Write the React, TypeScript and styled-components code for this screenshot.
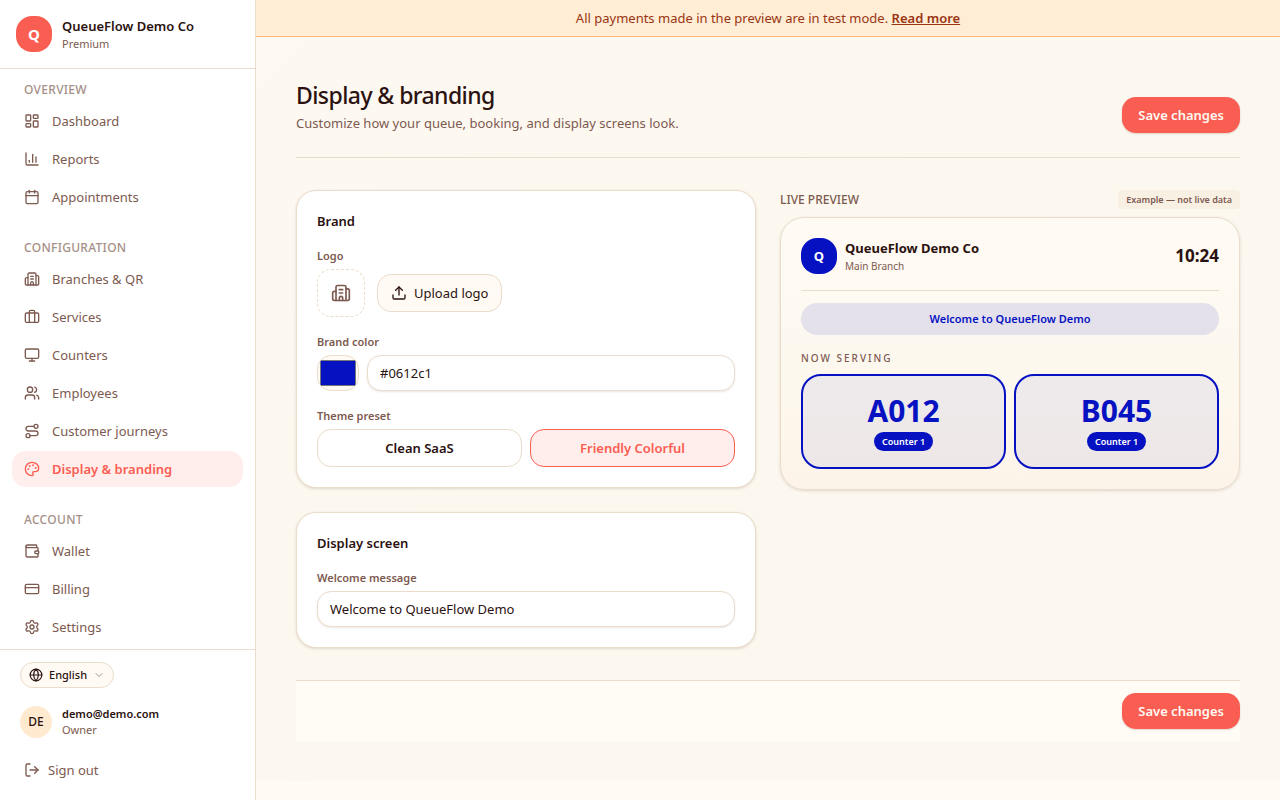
import React, { useState } from "react";
import styled, { createGlobalStyle, css } from "styled-components";
import {
  Briefcase,
  Building2,
  Calendar,
  ChartColumn,
  ChevronDown,
  CreditCard,
  Globe,
  LayoutDashboard,
  LogOut,
  Monitor,
  Palette,
  Route,
  Settings,
  Upload,
  Users,
  Wallet,
  type LucideIcon,
} from "lucide-react";

const color = {
  page: "#fffaf3",
  surface: "#ffffff",
  text: "#2b1210",
  muted: "#7d5a50",
  faint: "#a58f87",
  border: "#ebdccb",
  accent: "#fa5d52",
  accentSoft: "#ffeeec",
  peach: "#ffead0",
};

const GlobalStyle = createGlobalStyle`
  *, *::before, *::after { box-sizing: border-box; }
  body {
    margin: 0;
    background: ${color.page};
    color: ${color.text};
    font-family: "Noto Sans", "Open Sans", sans-serif;
    font-size: 13px;
    line-height: 20px;
  }
  button, input { font: inherit; color: inherit; }
  button { cursor: pointer; }
  h1, h2, p { margin: 0; }
`;

const Shell = styled.div`
  display: flex;
  align-items: flex-start;
  min-height: 100vh;
`;

const Sidebar = styled.aside`
  position: sticky;
  top: 0;
  display: flex;
  flex-direction: column;
  flex: 0 0 256px;
  height: 100vh;
  background: ${color.surface};
  border-right: 1px solid ${color.border};
`;

const Workspace = styled.header`
  display: flex;
  align-items: center;
  gap: 10px;
  padding: 16px;
  border-bottom: 1px solid ${color.border};
`;

const Monogram = styled.span<{ $tone: string; $size: number }>`
  display: flex;
  align-items: center;
  justify-content: center;
  flex: none;
  width: 36px;
  height: 36px;
  border-radius: 16px;
  background: ${(p) => p.$tone};
  color: #fff;
  font-size: ${(p) => p.$size}px;
  font-weight: 700;
`;

const Stack = styled.div`
  display: flex;
  flex-direction: column;
  min-width: 0;
`;

const Name = styled.span<{ $weight?: number }>`
  font-size: 13px;
  line-height: 20px;
  font-weight: ${(p) => p.$weight ?? 600};
`;

const Caption = styled.span<{ $small?: boolean }>`
  font-size: ${(p) => (p.$small ? 10 : 11)}px;
  line-height: 16px;
  color: ${color.muted};
`;

const Nav = styled.nav`
  display: flex;
  flex-direction: column;
  flex: 1;
  gap: 24px;
  min-height: 0;
  overflow: hidden;
  padding: 12px 12px 4px;
`;

const NavGroup = styled.section`
  display: flex;
  flex-direction: column;
  gap: 2px;
`;

const NavHeading = styled.h2`
  padding: 0 12px;
  margin-bottom: 2px;
  font-size: 12px;
  line-height: 18px;
  font-weight: 500;
  letter-spacing: 0.3px;
  text-transform: uppercase;
  color: ${color.faint};
`;

const NavLink = styled.a<{ $active?: boolean }>`
  display: flex;
  align-items: center;
  gap: 12px;
  height: 36px;
  flex: none;
  padding: 0 12px;
  border-radius: 14px;
  color: ${color.muted};
  text-decoration: none;
  ${(p) =>
    p.$active &&
    css`
      background: ${color.accentSoft};
      color: ${color.accent};
      font-weight: 600;
    `}
`;

const Account = styled.footer`
  display: flex;
  flex-direction: column;
  align-items: flex-start;
  border-top: 1px solid ${color.border};
  padding: 12px 12px 12px 20px;
`;

const Language = styled.button`
  display: flex;
  align-items: center;
  gap: 6px;
  height: 26px;
  padding: 0 8px;
  border: 1px solid ${color.border};
  border-radius: 13px;
  background: ${color.page};
  font-size: 11px;
  font-weight: 500;

  svg:last-child { color: ${color.faint}; }
`;

const Profile = styled.div`
  display: flex;
  align-items: center;
  gap: 10px;
  margin: 18px 0 14px;
`;

const Initials = styled.span`
  display: flex;
  align-items: center;
  justify-content: center;
  width: 32px;
  height: 32px;
  border-radius: 50%;
  background: ${color.peach};
  font-size: 12px;
  font-weight: 500;
`;

const Email = styled.span`
  font-size: 11px;
  line-height: 16px;
  font-weight: 600;
`;

const SignOut = styled.button`
  display: flex;
  align-items: center;
  gap: 8px;
  height: 36px;
  padding: 0 4px;
  border: 0;
  background: none;
  color: ${color.muted};
`;

const Main = styled.main`
  flex: 1;
  min-width: 0;
`;

const TestBanner = styled.div`
  padding: 8px 16px;
  text-align: center;
  background: #ffedd5;
  border-bottom: 1px solid #fdba74;
  color: #9a3412;

  a { color: inherit; font-weight: 600; text-decoration: underline; }
`;

const Content = styled.div`
  padding: 40px;
  background: linear-gradient(135deg, #fdf8f1, #fcf8ef 50%, #fcf7f1);
`;

const PageHeader = styled.header`
  display: flex;
  align-items: flex-end;
  justify-content: space-between;
  padding-bottom: 24px;
  margin-bottom: 32px;
  border-bottom: 1px solid ${color.border};
`;

const Title = styled.h1`
  font-size: 23px;
  line-height: 36px;
  font-weight: 500;
  letter-spacing: -0.025em;
`;

const Subtitle = styled.p`
  color: ${color.muted};
`;

const PrimaryButton = styled.button`
  height: 36px;
  padding: 0 16px;
  border: 0;
  border-radius: 14px;
  background: ${color.accent};
  color: #fffaf3;
  font-weight: 600;
  box-shadow: 0 1px 2px rgba(60, 20, 10, 0.16);
`;

const Columns = styled.div`
  display: grid;
  grid-template-columns: repeat(2, minmax(0, 1fr));
  gap: 24px;
  align-items: start;
`;

const Forms = styled.div`
  display: flex;
  flex-direction: column;
  gap: 24px;
`;

const Card = styled.section`
  display: flex;
  flex-direction: column;
  gap: 16px;
  padding: 20px;
  background: ${color.surface};
  border: 1px solid ${color.border};
  border-radius: 20px;
  box-shadow: 0 1px 3px rgba(90, 50, 20, 0.16);
`;

const CardTitle = styled.h2`
  font-size: 13px;
  line-height: 20px;
  font-weight: 600;
`;

const Field = styled.div`
  display: flex;
  flex-direction: column;
  gap: 4px;
`;

const labelText = css`
  font-size: 11px;
  line-height: 18px;
  font-weight: 600;
  color: ${color.muted};
`;

const Label = styled.label`
  ${labelText}
`;

const FieldName = styled.span`
  ${labelText}
`;

const FieldRow = styled.div<{ $gap: number }>`
  display: flex;
  align-items: center;
  gap: ${(p) => p.$gap}px;
`;

const LogoSlot = styled.div`
  display: flex;
  align-items: center;
  justify-content: center;
  width: 48px;
  height: 48px;
  border: 1px dashed ${color.border};
  border-radius: 14px;
  color: ${color.muted};
`;

const UploadButton = styled.button`
  display: flex;
  align-items: center;
  gap: 7px;
  height: 38px;
  padding: 0 13px;
  border: 1px solid ${color.border};
  border-radius: 14px;
  background: ${color.page};
`;

const Swatch = styled.input`
  width: 42px;
  height: 36px;
  padding: 0;
  border: 1px solid ${color.border};
  border-radius: 14px;
  background: ${color.page};
`;

const TextInput = styled.input`
  flex: 1;
  min-width: 0;
  height: 36px;
  flex-basis: 36px;
  padding: 0 12px;
  border: 1px solid ${color.border};
  border-radius: 14px;
  background: ${color.surface};
  box-shadow: 0 1px 2px rgba(60, 20, 10, 0.1);
`;

const Presets = styled.div`
  display: grid;
  grid-template-columns: 1fr 1fr;
  gap: 8px;
`;

const Preset = styled.button<{ $selected: boolean }>`
  height: 38px;
  border: 1px solid ${(p) => (p.$selected ? color.accent : color.border)};
  border-radius: 14px;
  background: ${(p) => (p.$selected ? color.accentSoft : color.surface)};
  color: ${(p) => (p.$selected ? color.accent : color.text)};
  font-weight: 600;
`;

const PreviewHeading = styled.div`
  display: flex;
  align-items: center;
  justify-content: space-between;
  margin-bottom: 8px;
  color: ${color.muted};
`;

const PreviewTitle = styled.h2`
  font-size: 12px;
  line-height: 19px;
  font-weight: 500;
  text-transform: uppercase;
`;

const Hint = styled.span`
  padding: 2px 8px;
  border-radius: 4px;
  background: #f9f0e4;
  font-size: 9px;
  line-height: 15px;
  font-weight: 600;
`;

const Screen = styled.section`
  padding: 20px;
  border: 1px solid ${color.border};
  border-radius: 24px;
  background: linear-gradient(180deg, #fffaf4, #fdf8ee 60%, #fdf4e9);
  box-shadow: 0 1px 3px rgba(90, 50, 20, 0.16);
`;

const ScreenHeader = styled.div`
  display: flex;
  align-items: center;
  gap: 8px;
  padding-bottom: 16px;
  border-bottom: 1px solid ${color.border};
`;

const Clock = styled.time`
  margin-left: auto;
  font-size: 17px;
  line-height: 28px;
  font-weight: 700;
`;

const Welcome = styled.p<{ $tone: string }>`
  margin-top: 12px;
  padding: 8px 12px;
  min-height: 32px;
  border-radius: 16px;
  background: color-mix(in srgb, ${(p) => p.$tone} 10%, transparent);
  color: ${(p) => p.$tone};
  font-size: 11px;
  line-height: 16px;
  font-weight: 600;
  text-align: center;
`;

const Serving = styled.p`
  margin: 16px 0 8px;
  font-size: 10px;
  line-height: 15px;
  font-weight: 500;
  letter-spacing: 2px;
  text-transform: uppercase;
  color: ${color.muted};
`;

const Tickets = styled.div`
  display: grid;
  grid-template-columns: 1fr 1fr;
  gap: 8px;
`;

const Ticket = styled.div<{ $tone: string }>`
  display: flex;
  flex-direction: column;
  align-items: center;
  gap: 2px;
  padding: 16px;
  border: 2px solid ${(p) => p.$tone};
  border-radius: 20px;
  background: color-mix(in srgb, ${(p) => p.$tone} 6%, transparent);
`;

const TicketNumber = styled.span<{ $tone: string }>`
  color: ${(p) => p.$tone};
  font-size: 30px;
  line-height: 38px;
  font-weight: 700;
`;

const CounterBadge = styled.span<{ $tone: string }>`
  padding: 2px 8px;
  border-radius: 10px;
  background: ${(p) => p.$tone};
  color: #fff;
  font-size: 9px;
  line-height: 15px;
  font-weight: 600;
`;

const ActionBar = styled.footer`
  display: flex;
  justify-content: flex-end;
  margin-top: 32px;
  padding: 12px 0;
  border-top: 1px solid ${color.border};
  background: #fffcf5;
`;

type NavEntry = { label: string; icon: LucideIcon };

const navigation: { heading: string; items: NavEntry[] }[] = [
  {
    heading: "Overview",
    items: [
      { label: "Dashboard", icon: LayoutDashboard },
      { label: "Reports", icon: ChartColumn },
      { label: "Appointments", icon: Calendar },
    ],
  },
  {
    heading: "Configuration",
    items: [
      { label: "Branches & QR", icon: Building2 },
      { label: "Services", icon: Briefcase },
      { label: "Counters", icon: Monitor },
      { label: "Employees", icon: Users },
      { label: "Customer journeys", icon: Route },
      { label: "Display & branding", icon: Palette },
    ],
  },
  {
    heading: "Account",
    items: [
      { label: "Wallet", icon: Wallet },
      { label: "Billing", icon: CreditCard },
      { label: "Settings", icon: Settings },
    ],
  },
];

const presets = ["Clean SaaS", "Friendly Colorful"];
const tickets = ["A012", "B045"];

export default function App() {
  const [brand, setBrand] = useState("#0612c1");
  const [preset, setPreset] = useState("Friendly Colorful");
  const [message, setMessage] = useState("Welcome to QueueFlow Demo");

  return (
    <>
      <GlobalStyle />
      <Shell>
        <Sidebar>
          <Workspace>
            <Monogram $tone={color.accent} $size={15}>Q</Monogram>
            <Stack>
              <Name>QueueFlow Demo Co</Name>
              <Caption>Premium</Caption>
            </Stack>
          </Workspace>
          <Nav>
            {navigation.map((group) => (
              <NavGroup key={group.heading}>
                <NavHeading>{group.heading}</NavHeading>
                {group.items.map(({ label, icon: Icon }) => (
                  <NavLink key={label} href="#" $active={label === "Display & branding"}>
                    <Icon size={16} />
                    {label}
                  </NavLink>
                ))}
              </NavGroup>
            ))}
          </Nav>
          <Account>
            <Language type="button">
              <Globe size={14} />
              English
              <ChevronDown size={12} />
            </Language>
            <Profile>
              <Initials>DE</Initials>
              <Stack>
                <Email>demo@demo.com</Email>
                <Caption>Owner</Caption>
              </Stack>
            </Profile>
            <SignOut type="button">
              <LogOut size={16} />
              Sign out
            </SignOut>
          </Account>
        </Sidebar>
        <Main>
          <TestBanner>
            All payments made in the preview are in test mode. <a href="#">Read more</a>
          </TestBanner>
          <Content>
            <PageHeader>
              <div>
                <Title>Display &amp; branding</Title>
                <Subtitle>Customize how your queue, booking, and display screens look.</Subtitle>
              </div>
              <PrimaryButton type="button">Save changes</PrimaryButton>
            </PageHeader>
            <Columns>
              <Forms>
                <Card>
                  <CardTitle>Brand</CardTitle>
                  <Field>
                    <FieldName>Logo</FieldName>
                    <FieldRow $gap={12}>
                      <LogoSlot>
                        <Building2 size={20} />
                      </LogoSlot>
                      <UploadButton type="button">
                        <Upload size={16} />
                        Upload logo
                      </UploadButton>
                    </FieldRow>
                  </Field>
                  <Field>
                    <Label htmlFor="brand-color">Brand color</Label>
                    <FieldRow $gap={8}>
                      <Swatch
                        type="color"
                        aria-label="Pick brand color"
                        value={/^#[0-9a-f]{6}$/i.test(brand) ? brand : "#000000"}
                        onChange={(e) => setBrand(e.target.value)}
                      />
                      <TextInput
                        id="brand-color"
                        type="text"
                        value={brand}
                        onChange={(e) => setBrand(e.target.value)}
                      />
                    </FieldRow>
                  </Field>
                  <Field>
                    <FieldName id="preset-label">Theme preset</FieldName>
                    <Presets role="group" aria-labelledby="preset-label">
                      {presets.map((name) => (
                        <Preset
                          key={name}
                          type="button"
                          $selected={preset === name}
                          aria-pressed={preset === name}
                          onClick={() => setPreset(name)}
                        >
                          {name}
                        </Preset>
                      ))}
                    </Presets>
                  </Field>
                </Card>
                <Card>
                  <CardTitle>Display screen</CardTitle>
                  <Field>
                    <Label htmlFor="welcome">Welcome message</Label>
                    <TextInput
                      id="welcome"
                      type="text"
                      value={message}
                      onChange={(e) => setMessage(e.target.value)}
                    />
                  </Field>
                </Card>
              </Forms>
              <div>
                <PreviewHeading>
                  <PreviewTitle>Live preview</PreviewTitle>
                  <Hint>Example — not live data</Hint>
                </PreviewHeading>
                <Screen>
                  <ScreenHeader>
                    <Monogram $tone={brand} $size={13}>Q</Monogram>
                    <Stack>
                      <Name $weight={700}>QueueFlow Demo Co</Name>
                      <Caption $small>Main Branch</Caption>
                    </Stack>
                    <Clock>10:24</Clock>
                  </ScreenHeader>
                  <Welcome $tone={brand}>{message}</Welcome>
                  <Serving>Now serving</Serving>
                  <Tickets>
                    {tickets.map((number) => (
                      <Ticket key={number} $tone={brand}>
                        <TicketNumber $tone={brand}>{number}</TicketNumber>
                        <CounterBadge $tone={brand}>Counter 1</CounterBadge>
                      </Ticket>
                    ))}
                  </Tickets>
                </Screen>
              </div>
            </Columns>
            <ActionBar>
              <PrimaryButton type="button">Save changes</PrimaryButton>
            </ActionBar>
          </Content>
        </Main>
      </Shell>
    </>
  );
}
